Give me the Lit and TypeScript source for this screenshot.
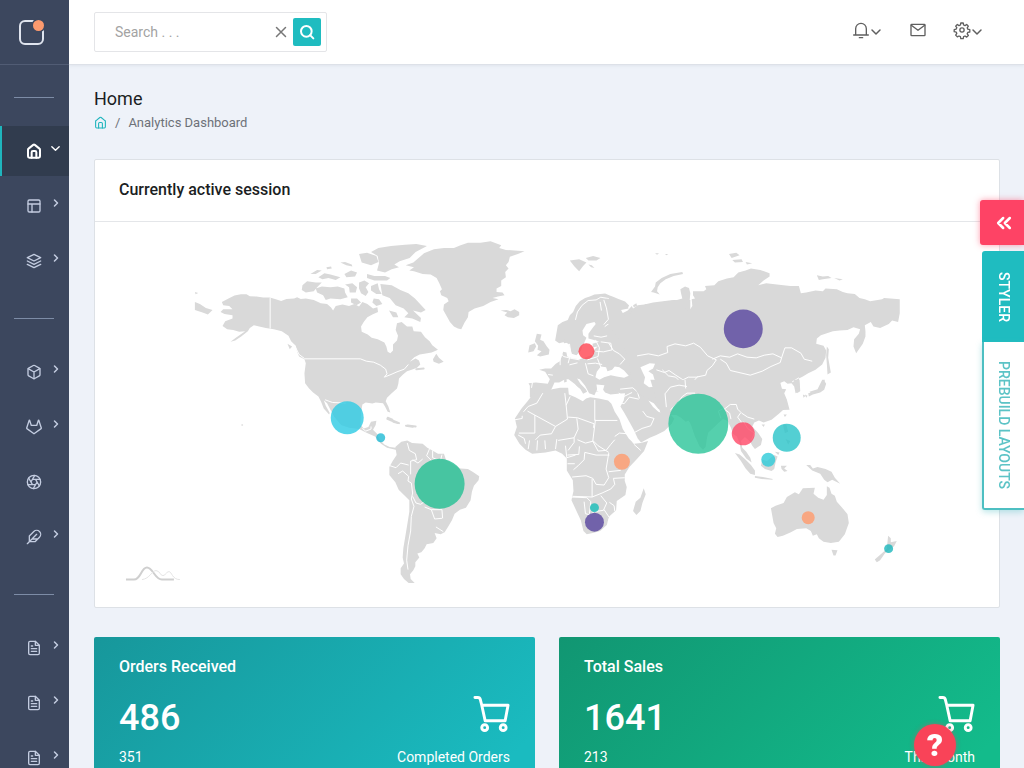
import { LitElement, html, css, svg, nothing } from "lit";
import { customElement, property } from "lit/decorators.js";

const ICONS: Record<string, unknown> = {
  home: svg`<path d="M3 10a2 2 0 0 1 .8-1.6l7-5.6a2 2 0 0 1 2.4 0l7 5.6A2 2 0 0 1 21 10v10a2 2 0 0 1-2 2H5a2 2 0 0 1-2-2z"/><path d="M8.500 22v-8a2 2 0 0 1 2-2h3a2 2 0 0 1 2 2v8"/>`,
  layout: svg`<rect x="3" y="3" width="18" height="18" rx="2"/><path d="M3 9h18M9 21V9"/>`,
  layers: svg`<path d="M12 2 2 7l10 5 10-5zM2 17l10 5 10-5M2 12l10 5 10-5"/>`,
  box: svg`<path d="M21 16V8a2 2 0 0 0-1-1.730l-7-4a2 2 0 0 0-2 0l-7 4A2 2 0 0 0 3 8v8a2 2 0 0 0 1 1.730l7 4a2 2 0 0 0 2 0l7-4A2 2 0 0 0 21 16z"/><path d="M3.270 6.960 12 12.010l8.730-5.050M12 22.080V12"/>`,
  gitlab: svg`<path d="M22.650 14.390 12 22.130 1.350 14.390a.84.84 0 0 1-.3-.94l1.220-3.780 2.440-7.510A.42.42 0 0 1 4.820 2a.43.43 0 0 1 .58 0 .42.42 0 0 1 .11.180l2.440 7.490h8.100l2.440-7.510A.42.42 0 0 1 18.600 2a.43.43 0 0 1 .58 0 .42.42 0 0 1 .11.180l2.440 7.510L23 13.450a.84.84 0 0 1-.35.940z"/>`,
  aperture: svg`<circle cx="12" cy="12" r="10"/><path d="m14.310 8 5.740 9.940M9.690 8h11.480M7.380 12l5.740-9.940M9.690 16 3.950 6.060M14.310 16H2.830m13.790-4-5.740 9.940"/>`,
  feather: svg`<path d="M20.240 12.240a6 6 0 0 0-8.490-8.490L5 10.500V19h8.500zM16 8 2 22M17.500 15H9"/>`,
  file: svg`<path d="M14 2H6a2 2 0 0 0-2 2v16a2 2 0 0 0 2 2h12a2 2 0 0 0 2-2V8z"/><path d="M14 2v6h6M16 13H8M16 17H8M10 9H8"/>`,
  right: svg`<path d="m9 18 6-6-6-6"/>`,
  down: svg`<path d="m4 8 8 8 8-8"/>`,
  close: svg`<path d="M3 3l18 18M21 3 3 21"/>`,
  search: svg`<circle cx="11" cy="11" r="8"/><path d="m21.500 21.500-4.800-4.800"/>`,
  bell: svg`<path d="M1 19.500h22M4 19.500V10a8 8 0 0 1 16 0v9.500M9.500 23.500h5"/>`,
  mail: svg`<rect x="1.500" y="3.500" width="21" height="17" rx="1"/><path d="m2 5 10 7.500L22 5"/>`,
  gear: svg`<circle cx="12" cy="12" r="3.200"/><path d="M10.200 1.500h3.600l.6 3 2.100.9 2.500-1.700 2.500 2.500-1.700 2.500.9 2.100 3 .6v3.600l-3 .6-.9 2.100 1.700 2.500-2.500 2.500-2.500-1.700-2.100.9-.6 3h-3.600l-.6-3-2.100-.9L5 22.200l-2.500-2.500 1.700-2.500-.9-2.100-3-.6v-3l3-.9.9-2.100L2.500 6.200 5 3.700l2.500 1.700 2.100-.9z"/>`,
  double: svg`<path d="m11 18-6-6 6-6M19 18l-6-6 6-6"/>`,
};

@customElement("ui-icon")
export class UiIcon extends LitElement {
  @property() name = "";
  @property({ type: Number }) size = 16;
  @property({ type: Number }) weight = 2;
  static styles = css`
    :host { display: inline-flex; }
    svg { display: block; fill: none; stroke: currentColor; stroke-linecap: round; stroke-linejoin: round; overflow: visible; }
  `;
  render() {
    return html`<svg width=${this.size} height=${this.size} viewBox="0 0 24 24" stroke-width=${this.weight} aria-hidden="true">${ICONS[this.name]}</svg>`;
  }
}

const MARKERS = [
  { place: "Mexico", x: 346.5, y: 418, r: 16.5, color: "#2dcae4" },
  { place: "Costa Rica", x: 380, y: 438, r: 4.5, color: "#21bad4" },
  { place: "Brazil", x: 439, y: 484, r: 25, color: "#22bf92" },
  { place: "Poland", x: 586, y: 351.5, r: 8, color: "#ff4450" },
  { place: "Kenya", x: 621.5, y: 462, r: 8, color: "#ff9a6c" },
  { place: "Botswana", x: 594, y: 508, r: 4.5, color: "#17bdb8" },
  { place: "South Africa", x: 594, y: 522.5, r: 9.5, color: "#56449e" },
  { place: "Russia", x: 743, y: 329, r: 19.5, color: "#56449e" },
  { place: "India", x: 698, y: 424, r: 30, color: "#2ac498" },
  { place: "Thailand", x: 743, y: 434, r: 11.5, color: "#ff4767" },
  { place: "Philippines", x: 786.5, y: 438, r: 14, color: "#28c3c8" },
  { place: "Brunei", x: 768, y: 460, r: 7, color: "#2dcbd8" },
  { place: "Australia", x: 808, y: 518, r: 6.5, color: "#ff9a6c" },
  { place: "New Zealand", x: 888.5, y: 549, r: 4.5, color: "#1ab6bb" },
];

@customElement("world-map")
export class WorldMap extends LitElement {
  static styles = css`
    :host { display: block; }
    svg { display: block; width: 100%; height: auto; }
    .land { fill: #d9d9d9; }
    .sea { fill: #fff; }
    .line { fill: none; stroke: #fff; stroke-width: 3; stroke-linejoin: round; }
    .spit { fill: none; stroke: #d9d9d9; stroke-width: 6; stroke-linecap: round; stroke-linejoin: round; }
    .dot { opacity: .8; }
    .mark { fill: none; stroke: #cfcfcf; stroke-width: 2; }
    .faint { fill: none; stroke: #e4e4e4; stroke-width: 1; }
  `;
  render() {
    const k = "scale(.33333)";
    return html`<svg viewBox="94 222 905 385" role="img" aria-label="World map of active sessions">
      <g transform="translate(185 230) ${k}">
        <path class="land" d="M108 216 128 206 146 197 165 193 182 193 192 199 212 200 232 203 252 203 270 208 286 213 302 207 325 206 334 202 345 207 360 206 384 210 405 220 424 222 436 233 442 242 450 228 470 224 490 228 506 222 520 230 530 216 545 222 562 236 575 232 577 246 560 254 545 262 534 276 526 290 528 306 546 314 558 324 576 328 596 338 602 350 606 366 614 370 622 362 622 344 634 332 637 318 630 300 634 280 648 276 664 290 680 290 684 304 706 306 718 322 732 334 740 346 757 360 738 368 716 372 702 374 686 382 672 396 690 386 700 392 704 404 694 414 678 420 664 424 652 434 640 446 638 462 634 476 618 490 604 504 600 514 608 530 614 548 606 546 598 530 592 520 570 518 560 521 540 518 530 524 526 550 524 584 534 596 548 592 556 576 572 573 570 586 562 600 574 612 580 628 596 644 612 652 630 654 644 658 630 660 604 654 586 642 568 620 544 610 520 598 490 594 466 586 446 562 434 540 424 520 414 511 420 528 432 550 430 554 414 536 406 516 398 500 382 488 370 476 358 460 356 430 360 400 356 388 340 380 334 366 330 348 316 334 308 318 288 304 264 298 240 294 220 290 204 286 192 294 186 304 166 320 148 332 134 336 150 324 164 314 178 304 160 306 142 300 124 298 110 288 118 274 140 266 140 256 116 252 104 246 112 238 140 238 130 228 112 226z"/>
        <path class="land" d="M27 216 42 222 60 234 80 240 66 254 50 248 27 240zM27 186 37 189 29 193zM742 388 752 372 760 384 774 396 760 402 744 396zM305 342 319 350 312 358zM350 166 364 154 390 158 408 158 394 172 384 184 360 188 348 180zM390 176 408 170 434 172 456 170 476 176 478 188 486 202 464 208 434 206 420 210 412 196 394 188zM374 132 394 120 408 122 390 132zM398 142 416 130 434 134 464 142 450 150 428 144 410 148zM464 98 478 96 498 104 500 110 482 106zM476 132 496 122 514 128 508 140 482 142zM478 164 500 160 514 172 510 188 492 188 490 172zM520 158 536 152 550 160 540 172 548 186 540 198 526 190 520 176zM544 132 566 138 598 138 614 144 604 152 566 152 544 144zM556 168 576 160 580 178 588 192 572 192 556 182zM584 162 618 166 644 180 668 190 688 206 720 240 706 248 682 242 706 264 704 276 680 266 656 262 668 250 654 236 630 226 612 204 590 196zM564 206 580 208 590 222 572 228 560 218zM610 242 632 248 638 262 622 262zM520 72 544 68 572 78 578 96 556 106 528 98zM556 66 578 54 616 48 658 44 692 42 724 48 690 66 672 84 642 94 626 104 640 112 618 118 598 128 574 122 580 100 576 78zM496 206 514 206 526 218 512 226 496 218zM422 112 436 110 438 116 424 118z"/>
        <path class="spit" d="M606 564 620 570M622 573 640 580M666 587 690 590"/>
        <path class="spit" d="M676 402 694 394M692 418 714 416"/>
        <path class="line" d="M253 203V296M356 387H524L542 394 564 397 584 406 600 418 604 432 596 442 616 434 634 426 656 418 668 404M418 510 440 518 480 520M328 350 340 374 356 386M530 596 540 604 556 598 556 590"/>
        <circle cx="169" cy="586" r="3" fill="#e4e4e4"/>
      </g>
      <g transform="translate(380 230) ${k}">
        <path class="land" d="M75 106 98 98 112 86 130 70 160 58 190 54 220 54 240 46 262 38 300 38 330 34 362 46 356 54 376 60 432 64 412 72 388 80 384 96 376 106 384 116 374 126 376 142 362 152 362 168 348 176 348 186 366 188 372 196 352 200 336 204 354 208 330 216 308 228 282 236 264 246 262 262 252 278 242 298 232 296 220 290 208 276 198 258 188 240 190 224 204 214 200 204 182 196 178 184 184 178 176 160 168 144 150 134 126 132 100 124 86 122 100 112z"/>
        <path class="land" d="M360 242 378 240 390 244 402 238 416 246 416 256 400 264 382 262 372 256 380 248z"/>
        <path class="land" d="M44 652 62 636 80 632 94 640 126 642 140 654 158 664 172 672 190 672 196 690 220 706 240 716 262 718 276 726 296 740 294 752 280 768 274 786 270 812 256 834 238 840 222 852 214 872 202 892 192 908 180 914 162 910 168 926 158 940 138 944 132 956 122 968 110 972 116 984 104 998 104 1010 98 1022 88 1034 90 1048 102 1060 84 1060 70 1048 60 1034 60 1016 70 1002 66 984 68 956 74 920 80 884 86 846 86 812 70 796 54 780 44 758 26 736 26 712 36 694 48 676z"/>
        <path class="line" d="M80 640 86 662 104 672 108 690 90 694 90 734M28 708 46 714 60 700 84 706M52 732 66 724 84 740 82 754 92 760 96 790 92 808 100 830 92 860 90 904 82 948 78 992 82 1020M96 800 106 820 120 824 134 814M134 640 148 654 138 678 152 692M156 662V684L170 690M184 675 180 691M132 832 152 840 162 868 184 866M152 840H184L186 866M166 892 188 906M96 690 112 700 126 688"/>
        <path class="spit" d="M20 567 34 573M38 576 52 580M76 588 96 591"/>
      </g>
      <g transform="translate(505 280) ${k}">
        <path class="land" d="M157 136l14-10 16-6 6-14 10-10 8-18 12-14 16-10 14-4 14-6 18-2 14-1 14 6 12 4 14 6 20 8 12 12-4 8-20-2-16-3 12 10 8 10 16-8 12-14 4 8 14-10 20-2 26-6 60-8 52 0V430l-18-26-30 0-28-8-20-8-14-18-16-8 14 20 16 14 14 5 10-5 12 8 12 12-8 16-22 22-24 12-20 8-26 14-10-12-12-26-12-22-16-28-12-20 10-18 4-22-22 2-22 2-16-6-6-8 4-14-24-2 2 14-8 18-16-6-12-22-16-20-8-2 10 16 16 16 4 8-12 6-8-14-18-16-18-14-10 0-18 10-14 0-8 18-12 14-16 14-18 4-20-6 0-34-4-8 22-2 36 4 6-14-14-22-18-6 18-4 18 0 14-14 12-8 6-14 4-14 10 2 2 12 18 6 20 2 24-8 16-6-2-10 16-14-14 2-2-10 20-6-18-6-14-4 0-14 14-20 8-10-4-6-24 6-12 20 2 14 10 8-8 18-10 22-12 12-14-4-8-28-12-8-18 4-12-8z"/>
        <path class="land" d="M94 162l14 2-4 16 10 4 10 16 8 10-2 14-26 6-10-4 14-12-12-4 2-12-10-14zM72 196l16-6 4 10-8 14-16 4zM172 182l12-8 2 14-10 2zM210 314l14-2-4 12zM176 286l6 0 2 20-8 2zM262 330l18 4-14 2zM315 334l16-4-8 8z"/>
        <path class="land" d="M90 340 112 332 140 328 164 324 188 324 190 344 210 352 232 364 242 356 254 352 280 356 308 362 318 372 328 396 342 418 352 448 370 476 386 492 406 490 428 484 416 514 396 536 372 562 358 584 358 604 364 622 360 646 334 664 332 692 312 710 304 736 284 754 262 760 244 764 234 754 226 722 214 696 198 662 204 634 202 602 184 572 184 536 170 522 150 512 120 518 80 522 60 510 42 492 26 466 34 442 28 416 48 386 66 364 80 346z"/>
        <path class="land" d="M415 626l6 18-10 26-6 24-12 12-10-12 8-28 14-12z"/>
        <path class="sea" d="M270 292l4-16 12-16 16 2 4 12 14-4 8-10 14 2 14 10 14 16-14 6-22-4-18-4-20 6-14 8zM412 262l16-10 18 4-8 14-10 4 12 14-2 10 10 6-2 18-16-2-12-10 4-16-12-14-4-10z"/>
        <path class="line" d="M210 120l6-24 14-20 18-14 24-2 14-8 24 4M284 66l4 26M312 64l10 24 4 24-14 18-14 10M265 168l22 4 18-4M286 186l30 4 4 20-26 6-24-2M160 212l14 18 26 6 22 4M170 206l-6 28 0 22M192 192l4 28-8 30M232 198l4 40M270 180l12 24-4 26-32 10M246 252l24-2 20 4M276 236l10 26M310 190l14 22 18 10 16 16-14 16M84 290l-6 34M240 250l8 32 16 6M128 284l14 2M192 255l24-6M405 270l-4-22 10-14 40-2 30-4 24 4 6-20 14-18 16-6M460 270l18-2 20 10 22 20 10 18M446 322l22 4 16 10 4 30-2 32M446 272l18 24 26 4 18 22 22-2M484 336l22-8 22-2M344 328l38-4 14 12 6 20M340 340l16 10 24-12M338 366l18 6 16-20 28 6M382 296l18-2 10 16M384 460l26-14 26-8 10-22-22-6-12-16"/>
        <path class="line" d="M112 340 94 370 68 380 54 396M28 420 50 416V408M66 394 150 440 186 418 182 376 178 340M182 376 194 350M188 412l28 2 50 18-2 12M268 360V422H336M270 420l-8 64M88 406V460H40M150 440l-12 22-34 4-14 14M214 416l4 32-12 26-48 8M206 474l0 14-18 24M154 478l-4 30M216 480l24 10 24-6 14 14 32 20M222 500l-2 24-34 2M262 484l16 30 24-2 14-18 12-14M328 470l14-10 24 2 20 30M386 494l20 18M310 520l-8 48 8 26-14 22-24-2-10-18-20-8-42 4M204 570l14-12 18-18 2-22 34 8 40 0M310 576l36-4M202 650l58 2 0-54M198 652l46 2 12 12-4 36M260 652l30-12 26-12 12-14-4-18 34-2M286 648l18 22-10 22-28 4-12 10-14-4-4-36M296 690l16 24-4 14M312 668l14 10 2 16M38 466l18 10 4 16M72 482l-4 26M96 482l-2 30M118 482l2 26M180 498l4 36 26-8M186 552l22 0"/>
      </g>
      <g transform="translate(560 230) ${k}">
        <path class="land" d="M138 206 162 212 186 220 202 228 204 236 182 240 194 262 216 244 240 232 256 222 272 226 296 218 324 214 350 210 366 206 362 190 360 178 374 170 386 174 390 190 388 212 378 232 370 242 388 240 396 228 394 208 404 206 398 196 398 184 430 184 438 178 434 168 462 166 474 154 500 146 520 142 534 128 556 122 572 116 600 120 628 130 628 140 610 152 594 166 618 160 650 164 690 168 716 168 722 190 738 188 766 182 788 184 796 176 830 178 848 186 862 190 884 192 898 204 914 208 930 214 966 208 972 204 1019 208V250L1014 276 996 272 986 282 960 294 940 290 932 276 914 286 916 304 916 320 908 342 888 370 880 350 882 328 896 312 900 298 880 292 862 300 838 302 818 304 800 310 782 316 770 326 768 342 790 348 798 362 796 384 786 404 766 420 744 430 728 440 716 446 718 466 720 484 706 490 702 470 694 460 682 462 672 454 654 462 658 476 678 478 672 490 680 510 688 540 388 550H350L232 490 212 450 204 380 174 324 138 274z"/>
        <path class="land" d="M272 186 284 170 286 158 304 144 330 132 366 126 368 132 340 138 316 148 300 160 292 172 290 184 298 194 280 188zM28 92 56 88 78 98 68 108 56 124 42 110zM76 84 98 78 120 84 108 92 84 92zM84 104 94 106 102 114 92 112zM506 72 528 68 538 76 514 84zM516 90 544 88 548 96 524 98zM556 96 576 100 560 104zM770 136 788 140 804 138 814 144 788 148 776 150zM822 144 848 148 838 152zM284 70 296 70 290 74zM314 72 324 72 318 76zM218 226 228 220 230 228 220 232zM800 350 806 358 804 384 812 428 802 434 800 402 798 376zM790 450 798 462 792 480 780 488 758 494 746 500 744 490 768 484 784 470zM734 494 742 498 738 504z"/>
        <path class="sea" d="M240 412l28-12 16 2-6 14-14 8 14 10 4 14 6 8-2 14-20 2-16-12 4-18-8-16z"/>
        <path class="line" d="M130 210l8 24 6 34-14 16M230 378l34-6 30 6 28-10-2-18 24-8 32 6 24-8 20 12 22 26 26 12-12 18-16 14-4 14-28 6-24 0-16 8-22-14-20-14-14 6-24-8M412 440l-12 14M456 388 480 378 508 382 532 372 560 382 588 384 612 376 638 372 664 384 660 398 632 410 606 424 570 436 536 428 510 422 498 400 480 388M664 384 674 354 694 354 722 370 732 388 756 394"/>
        <path class="line" d="M306 420l18 18 22 4 22 22-12 14M368 464l24-12 14 16-16 14M320 480l22-8 20 6M402 478l-20 24M696 456l20-12"/>
      </g>
      <g transform="translate(650 380) ${k}">
        <path class="land" d="M0 0H388l10 38 10 20-2 26-20 18-22 18-24 8-14-6-14 6-6 12 18 20 12 18-4 18-18 12-8-10-6-12-16-14-12 12 4 20 12 12 12 18 4 14-16-12-16-22-4-24-8-20-12-8-6-18-10-20-14-6-12 10-14 14-18 16-4 16-4 28-8 8-10-10-14-30-12-34-6-14-10 4-14-12-14-8-46 0z"/>
        <path class="land" d="M254 220l14 4 16 14 18 18 12 16 0 14-14-4-14-16-14-22zM314 289l24 3 30 6-2 2-32-2-20-4zM336 240l14 4 22-18 10 4-6 18-4 20-8 6-20-6-12-10zM392 258l18 0-8 8 10 8-10 2-8-8zM468 256l12 0 8 10 14-4 24 6 18 8 10 18 16 18-24-12-14 8-10-8-12-18-24-10zM400 104l10 0-6 8zM334 134l10 0-4 8zM398 136l10-2 6 22-10 4zM406 178l14 6-6 10zM374 216l14 2-4 8zM430 0h18l2 32-8 8-6-18zM516 0h8l-4 22-18 14-20 4-4-4 24-8zM458 44l8 4-6 6z"/>
        <path class="land" d="M362 386l14-8 24-8 10-18 24-14 12 6 12-18 36-2-4 18 14 12 16 6 10-14 0-26 8 4 6 18 10 6 6 18 16 18 16 20 4 26-12 34-18 22-24 4-22-4-14-10-6-12-12 4-6-14-14-8-28 2-18 10-24 10-16 4-8-10 4-16-8-16zM544 510l18 2-6 16-6 0zM714 468l8 8 0 12 18-4-8 16-12 8-16 14-14 20-10 6-6-8 18-16 18-16z"/>
        <path class="line" d="M48 82l-4-40 16-20 26-6 24 4M106 26l-2-26M208 70l14 18 16 12 4 18M222 88l18-14 18 0 4 14 10 10-10 14 12 16M274 100l18 12 20 6M280 126l12 20 20 14-8 20M212 116l-8-22 16-8M60 90l20-18 16-22 14-10 24 0"/>
      </g>
      ${MARKERS.map((m) => svg`<circle class="dot" cx=${m.x} cy=${m.y} r=${m.r} fill=${m.color}><title>${m.place}</title></circle>`)}
      <path class="mark" d="M125 580h8c7 0 7-12 13-12s8 12 15 12h12"/>
      <path class="faint" d="M141 580c8-1 10-9 14-9s4 5 7 5 3-4 6-4 3 8 11 8"/>
    </svg>`;
  }
}

@customElement("stat-card")
export class StatCard extends LitElement {
  @property() heading = "";
  @property() value = "";
  @property() count = "";
  @property() note = "";
  static styles = css`
    :host { display: block; padding: 18px 25px 25px; border-radius: 2px; color: #fff; }
    h2 { margin: 0; font-size: 16px; line-height: 24px; font-weight: 500; }
    .row { display: flex; justify-content: space-between; align-items: center; }
    .figure { height: 54px; margin-top: 12px; }
    .value { font-size: 36px; line-height: 54px; font-weight: 500; }
    svg { display: block; fill: none; stroke: #fff; stroke-width: 3; stroke-linecap: round; stroke-linejoin: round; margin-bottom: 8px; }
    .foot { font-size: 14px; line-height: 24px; }
  `;
  render() {
    return html`<h2>${this.heading}</h2>
      <div class="row figure"><span class="value">${this.value}</span>
        <svg width="37" height="38" viewBox="0 0 38 38" aria-hidden="true"><path d="M2 2h3q2 0 2.500 2L9 10l3.500 16h20.500L36 10H9"/><circle cx="12" cy="33" r="3"/><circle cx="31" cy="33" r="3"/></svg></div>
      <div class="row foot"><span>${this.count}</span><span>${this.note}</span></div>`;
  }
}

const NAV = [
  [{ icon: "home", label: "Dashboard", sub: true, active: true }, { icon: "layout", label: "Layouts", sub: true }, { icon: "layers", label: "Starter kit", sub: true }],
  [{ icon: "box", label: "Components", sub: true }, { icon: "gitlab", label: "Icons", sub: true }, { icon: "aperture", label: "Widgets", sub: false }, { icon: "feather", label: "Editors", sub: true }],
  [{ icon: "file", label: "Forms", sub: true }, { icon: "file", label: "Tables", sub: true }, { icon: "file", label: "Pages", sub: true }],
] as { icon: string; label: string; sub: boolean; active?: boolean }[][];

@customElement("app-root")
export class AppRoot extends LitElement {
  static styles = css`
    :host { display: grid; grid-template-columns: 69px minmax(0, 1fr); height: 100vh; overflow: hidden; background: #eef2f9; color: #1b1e23; font-family: Roboto, sans-serif; font-size: 14px; }
    * { box-sizing: border-box; }
    button { border: 0; padding: 0; background: none; color: inherit; font: inherit; cursor: pointer; display: flex; align-items: center; justify-content: center; }
    .side { z-index: 1; background: #3c475e; overflow: hidden; color: #c3cce0; }
    .brand { height: 65px; border-bottom: 1px solid #515c74; display: flex; align-items: center; padding-left: 18px; }
    .brand svg { display: block; }
    nav { display: flex; flex-direction: column; padding-top: 5px; }
    .rule { flex: none; height: 1px; margin: 27px 15px 28px 14px; border: 0; background: #7d8ca6; }
    .item { flex: none; display: flex; align-items: center; height: 50px; margin-bottom: 5px; padding-left: 24px; gap: 8px; color: inherit; border-left: 2px solid transparent; text-decoration: none; }
    .item .caret { margin-bottom: 6px; }
    .active { color: #fff; background: #313c4e; border-left-color: #1fb5bd; }
    .page { display: flex; flex-direction: column; min-width: 0; min-height: 0; }
    header { flex: none; display: flex; justify-content: space-between; align-items: center; height: 65px; padding: 0 41px 0 25px; background: #fff; border-bottom: 1px solid #dde1e8; box-shadow: 0 1px 3px #dfe4ec; }
    .search { display: flex; align-items: center; width: 233px; height: 40px; padding: 0 5px 0 20px; border: 1px solid #e4e5e8; border-radius: 2px; color: #777; }
    .search input { flex: 1; min-width: 0; border: 0; padding: 0; outline: 0; background: none; font: 14px Roboto, sans-serif; color: #444; }
    .search input::placeholder { color: #a3a3a3; opacity: 1; }
    .search .go { width: 28px; height: 28px; margin-left: 6px; border-radius: 2px; background: #1fbcc0; color: #fff; }
    .tools { display: flex; align-items: center; gap: 28px; color: #5f5f5f; margin-bottom: 4px; }
    .tools button { gap: 1px; }
    .tools .caret { padding-top: 4px; }
    main { flex: 1; min-height: 0; overflow-y: auto; scrollbar-width: none; padding: 22px 24px 25px 25px; }
    h1 { margin: 0; font-size: 18px; line-height: 24px; font-weight: 400; }
    .crumbs { display: flex; align-items: center; gap: 8px; height: 22px; font-size: 13px; color: #6d7178; }
    .crumbs a { display: flex; color: #1fb5bd; }
    .panel { margin: 26px 0 29px; background: #fff; border: 1px solid #dde1e6; border-radius: 2px; }
    .panel h2 { margin: 0; padding: 18px 24px 19px; font-size: 16px; line-height: 24px; font-weight: 500; border-bottom: 1px solid #e4e6e9; }
    .cards { display: grid; grid-template-columns: 1fr 1fr; gap: 24px; }
    .teal { background: linear-gradient(135deg, #17979b, #1abbc0 90%); }
    .green { background: linear-gradient(135deg, #119672, #13bb8b 90%); }
    .dock { position: fixed; right: 0; top: 200px; display: flex; flex-direction: column; align-items: flex-end; }
    .dock .toggle { width: 44px; height: 45px; margin-bottom: 6px; padding-left: 3px; border-radius: 3px 0 0 3px; background: #fe4365; color: #fff; box-shadow: 0 0 6px #fe436588; }
    .tab { width: 42px; writing-mode: vertical-rl; font-size: 14px; font-weight: 500; }
    .styler { height: 91px; padding-left: 2px; background: #1fbcc0; color: #fff; border-radius: 3px 0 0 0; }
    .layouts { height: 168px; background: #fff; color: #5cc3c6; border: solid #4dbfc2; border-width: 0 0 2px 2px; border-radius: 0 0 0 3px; box-shadow: 0 2px 6px #4dbfc266; }
    .help { position: fixed; right: 68px; bottom: 2px; width: 42px; height: 42px; border-radius: 50%; background: #f94358; color: #fff; font-size: 32px; font-weight: 900; box-shadow: 0 0 5px #f9435877; }
  `;
  render() {
    return html`
      <aside class="side">
        <div class="brand"><svg width="28" height="28" viewBox="0 0 28 28" aria-label="Logo"><rect x="2" y="3" width="23" height="23" rx="5" fill="none" stroke="#dfe4ee" stroke-width="2"/><circle cx="20.500" cy="7.500" r="7" fill="#3c475e"/><circle cx="20.500" cy="7.500" r="5.500" fill="#fc9a6e"/></svg></div>
        <nav aria-label="Main">
          ${NAV.map((group) => html`<hr class="rule" />${group.map((n) => html`<a class="item ${n.active ? "active" : ""}" href="#" aria-label=${n.label}>
            <ui-icon name=${n.icon} size="16" weight=${n.active ? 3 : 2}></ui-icon>${n.sub ? html`<ui-icon class="caret" name=${n.active ? "down" : "right"} size=${n.active ? 11 : 12} weight="3"></ui-icon>` : nothing}</a>`)}`)}
        </nav>
      </aside>
      <div class="page">
        <header>
          <form class="search" role="search" @submit=${(e: Event) => e.preventDefault()}>
            <input type="text" placeholder="Search . . ." aria-label="Search" />
            <button type="reset" aria-label="Clear"><ui-icon name="close" size="12" weight="3"></ui-icon></button>
            <button class="go" aria-label="Search"><ui-icon name="search" size="16" weight="3"></ui-icon></button>
          </form>
          <div class="tools">
            <button aria-label="Notifications"><ui-icon name="bell" size="16"></ui-icon><ui-icon class="caret" name="down" size="12" weight="3"></ui-icon></button>
            <button aria-label="Messages"><ui-icon name="mail" size="16"></ui-icon></button>
            <button aria-label="Settings"><ui-icon name="gear" size="16"></ui-icon><ui-icon class="caret" name="down" size="12" weight="3"></ui-icon></button>
          </div>
        </header>
        <main>
          <h1>Home</h1>
          <div class="crumbs"><a href="#" aria-label="Home"><ui-icon name="home" size="13"></ui-icon></a><span>/</span><span>Analytics Dashboard</span></div>
          <section class="panel"><h2>Currently active session</h2><world-map></world-map></section>
          <div class="cards">
            <stat-card class="teal" heading="Orders Received" value="486" count="351" note="Completed Orders"></stat-card>
            <stat-card class="green" heading="Total Sales" value="1641" count="213" note="This Month"></stat-card>
          </div>
        </main>
      </div>
      <div class="dock">
        <button class="toggle" aria-label="Open panel"><ui-icon name="double" size="20" weight="3"></ui-icon></button>
        <button class="tab styler">STYLER</button>
        <button class="tab layouts">PREBUILD LAYOUTS</button>
      </div>
      <button class="help" aria-label="Help">?</button>`;
  }
}
